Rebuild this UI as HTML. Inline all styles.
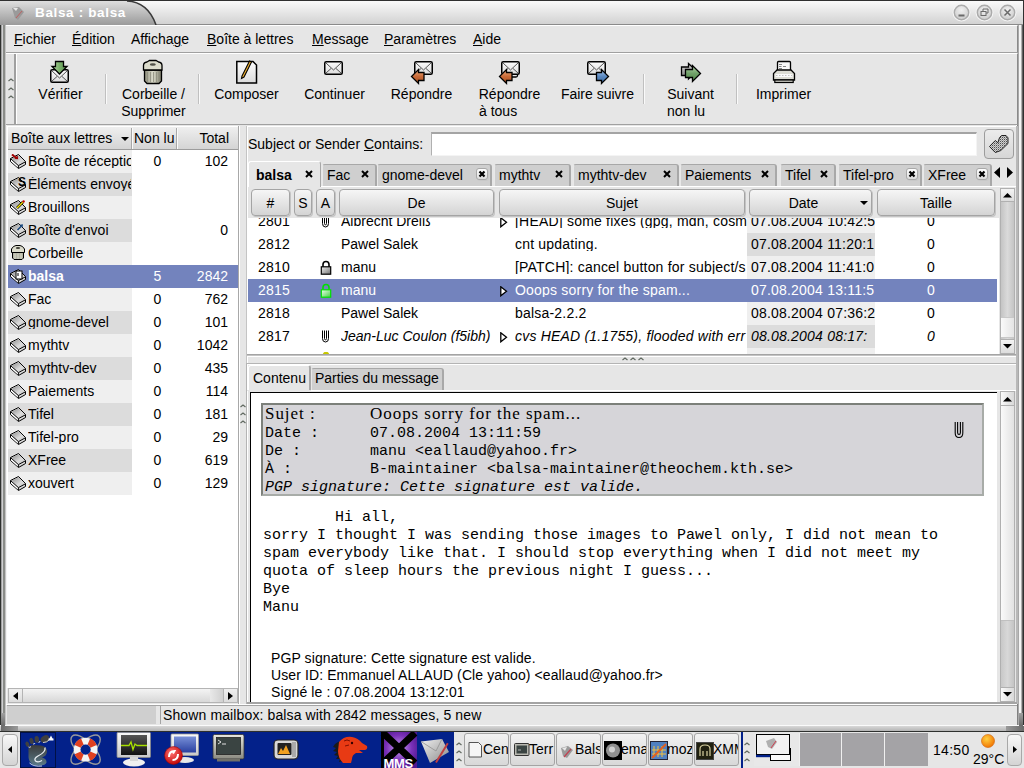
<!DOCTYPE html>
<html><head><meta charset="utf-8">
<style>
*{box-sizing:border-box}
html,body{margin:0;padding:0}
body{width:1024px;height:768px;position:relative;overflow:hidden;background:#e6e6e6;font-family:"Liberation Sans",sans-serif;font-size:14px;color:#000}
.a{position:absolute}
.t{position:absolute;white-space:pre;line-height:1}
u{text-decoration:underline;text-decoration-thickness:1px;text-underline-offset:1px}
</style></head><body>

<!-- ===== window frame ===== -->
<div class="a" style="left:0;top:0;width:1024px;height:732px;background:#e6e6e6"></div>
<div class="a" style="left:0;top:0;width:7px;height:732px;background:linear-gradient(90deg,#2e302e 0,#2e302e 1px,#a0a0a0 1px,#a0a0a0 2px,#d0d0d2 2px,#d0d0d2 3px,#8a8c88 3px,#8a8c88 5px,#c4c4c4 5px,#c4c4c4 6px,#f4f4f4 6px)"></div>
<div class="a" style="left:1016px;top:0;width:8px;height:732px;background:linear-gradient(90deg,#fff 0,#fff 1px,#808080 1px,#808080 2px,#a8a8a8 2px,#a8a8a8 3px,#f4f4f4 3px,#f4f4f4 5px,#b0b0b0 5px,#b0b0b0 6px,#606060 6px,#606060 7px,#303030 7px)"></div>
<div class="a" style="left:0;top:725px;width:1024px;height:7px;background:linear-gradient(#fafafa 0,#fafafa 1px,#d8d8d8 1px,#b4b4b4 6px,#2e302e 6px)"></div>
<div class="a" style="left:1006px;top:726px;width:18px;height:5px;background:linear-gradient(90deg,#9a9a9a,#6a6a6a)"></div>
<div class="a" style="left:1019px;top:713px;width:4px;height:13px;background:linear-gradient(#a0a0a0,#6a6a6a)"></div>
<div class="a" style="left:1px;top:726px;width:17px;height:5px;background:linear-gradient(90deg,#6a6a6a,#9a9a9a)"></div>
<div class="a" style="left:1px;top:713px;width:4px;height:13px;background:linear-gradient(#a0a0a0,#6a6a6a)"></div>
<!-- ===== title bar ===== -->
<div class="a" style="left:1px;top:0;width:1022px;height:25px;background:linear-gradient(#fafafa,#d2d2d2);border-top:1px solid #303030;border-bottom:1px solid #8a8a8a"></div>
<svg class="a" style="left:0;top:0" width="170" height="25">
<defs><linearGradient id="tg" x1="0" y1="0" x2="0" y2="1"><stop offset="0" stop-color="#dedede"/><stop offset="1" stop-color="#9a9a9a"/></linearGradient></defs>
<path d="M0 1 H127 Q148 2 156 25 H0 Z" fill="url(#tg)"/>
<path d="M127 1 Q148 2 156 25" fill="none" stroke="#3a3a3a" stroke-width="1.6"/>
<rect x="0" y="0" width="170" height="1" fill="#303030"/>
</svg>
<svg class="a" style="left:10px;top:5px" width="16" height="16"><path d="M2 3 L9 2 L14 7 L8 15 L5 13 Z" fill="#9a9a9a"/><path d="M3 3 L8 3 L6 6Z" fill="#e8e8e8"/><path d="M12 6 L6 13" stroke="#c06060" stroke-width="1"/></svg>
<div class="t" style="left:35px;top:6px;font-weight:bold;font-size:13.5px;letter-spacing:0.65px;color:#fff">Balsa : balsa</div>
<!-- window buttons -->
<svg class="a" style="left:950px;top:2px" width="70" height="22">
<defs><radialGradient id="wb" cx="0.5" cy="0.35" r="0.6"><stop offset="0" stop-color="#f0f0f0"/><stop offset="1" stop-color="#cfcfcf"/></radialGradient></defs>
<g transform="translate(11.5,10.5)"><circle r="9" fill="#f4f4f4"/><circle r="7.2" fill="url(#wb)" stroke="#ababab" stroke-width="1.4"/><rect x="-3" y="2" width="6" height="2" fill="#6a6a6a"/></g>
<g transform="translate(34.5,10.5)"><circle r="9" fill="#f4f4f4"/><circle r="7.2" fill="url(#wb)" stroke="#ababab" stroke-width="1.4"/><rect x="-3.5" y="-1" width="5" height="4" fill="none" stroke="#6a6a6a" stroke-width="1"/><path d="M-1.5 -1 V-3.5 H3.5 V0.5 H1.5" fill="none" stroke="#6a6a6a" stroke-width="1"/></g>
<g transform="translate(57.5,10.5)"><circle r="9" fill="#f4f4f4"/><circle r="7.2" fill="url(#wb)" stroke="#ababab" stroke-width="1.4"/><path d="M-3 -3 L3 3 M3 -3 L-3 3" stroke="#6a6a6a" stroke-width="1.5"/></g>
</svg>

<!-- ===== menubar ===== -->
<div class="a" style="left:6px;top:25px;width:1012px;height:28px;background:#e6e6e6;border-top:1px solid #fff;border-bottom:1px solid #a0a0a0;border-right:1px solid #8a8a8a"></div>
<div class="t" style="left:14px;top:32px"><u>F</u>ichier</div>
<div class="t" style="left:72px;top:32px"><u>É</u>dition</div>
<div class="t" style="left:131px;top:32px">Afficha<u>g</u>e</div>
<div class="t" style="left:207px;top:32px"><u>B</u>oîte à lettres</div>
<div class="t" style="left:312px;top:32px"><u>M</u>essage</div>
<div class="t" style="left:384px;top:32px"><u>P</u>aramètres</div>
<div class="t" style="left:473px;top:32px"><u>A</u>ide</div>

<!-- ===== toolbar ===== -->
<div class="a" style="left:6px;top:53px;width:1012px;height:72px;background:#e6e6e6;border-top:1px solid #fff;border-bottom:1px solid #a0a0a0;border-right:1px solid #8a8a8a"></div>
<div class="a" style="left:7px;top:54px;width:10px;height:70px;background:linear-gradient(90deg,#e4e4e4 0,#e4e4e4 7px,#a0a0a0 7px,#a0a0a0 9px,#fff 9px)"></div>

<!-- toolbar separators -->
<div class="a" style="left:105px;top:74px;width:1px;height:30px;background:#c0c0c0;border-right:1px solid #fafafa;width:2px"></div>
<div class="a" style="left:198px;top:74px;width:2px;height:30px;background:#c0c0c0;border-right:1px solid #fafafa"></div>
<div class="a" style="left:643px;top:74px;width:2px;height:30px;background:#c0c0c0;border-right:1px solid #fafafa"></div>
<div class="a" style="left:736px;top:74px;width:2px;height:30px;background:#c0c0c0;border-right:1px solid #fafafa"></div>
<!-- toolbar handle dots -->
<svg class="a" style="left:8px;top:78px" width="6" height="5"><path d="M0.5 3 L3 1 L5.5 3" fill="none" stroke="#606860" stroke-width="1.2"/></svg>
<svg class="a" style="left:8px;top:87px" width="6" height="5"><path d="M0.5 3 L3 1 L5.5 3" fill="none" stroke="#606860" stroke-width="1.2"/></svg>
<svg class="a" style="left:8px;top:95px" width="6" height="5"><path d="M0.5 3 L3 1 L5.5 3" fill="none" stroke="#606860" stroke-width="1.2"/></svg>

<!-- labels -->
<div class="t" style="left:20px;top:87px;width:81px;text-align:center">Vérifier</div>
<div class="t" style="left:113px;top:87px;width:81px;text-align:center">Corbeille /</div>
<div class="t" style="left:113px;top:104px;width:81px;text-align:center">Supprimer</div>
<div class="t" style="left:206px;top:87px;width:81px;text-align:center">Composer</div>
<div class="t" style="left:294px;top:87px;width:81px;text-align:center">Continuer</div>
<div class="t" style="left:381px;top:87px;width:81px;text-align:center">Répondre</div>
<div class="t" style="left:469px;top:87px;width:81px;text-align:center">Répondre</div>
<div class="t" style="left:479px;top:104px">à tous</div>
<div class="t" style="left:547px;top:87px;width:101px;text-align:center">Faire suivre</div>
<div class="t" style="left:650px;top:87px;width:81px;text-align:center">Suivant</div>
<div class="t" style="left:667px;top:104px">non lu</div>
<div class="t" style="left:743px;top:87px;width:81px;text-align:center">Imprimer</div>

<!-- icons -->
<svg class="a" style="left:0;top:0" width="820" height="90">
<defs>
<linearGradient id="env" x1="0" y1="0" x2="0" y2="1"><stop offset="0" stop-color="#fdfdfd"/><stop offset="1" stop-color="#dcdcdc"/></linearGradient>
<linearGradient id="grn" x1="0" y1="0" x2="1" y2="0"><stop offset="0" stop-color="#b8d8a8"/><stop offset="0.5" stop-color="#7ab06a"/><stop offset="1" stop-color="#5a9050"/></linearGradient>
<linearGradient id="org" x1="0" y1="0" x2="0" y2="1"><stop offset="0" stop-color="#f0b080"/><stop offset="0.5" stop-color="#c86a38"/><stop offset="1" stop-color="#a85020"/></linearGradient>
<linearGradient id="blu" x1="0" y1="0" x2="0" y2="1"><stop offset="0" stop-color="#a8c8ec"/><stop offset="0.5" stop-color="#5a88c0"/><stop offset="1" stop-color="#3a6aa0"/></linearGradient>
<linearGradient id="grn2" x1="0" y1="0" x2="0" y2="1"><stop offset="0" stop-color="#b0d8a8"/><stop offset="0.5" stop-color="#70a068"/><stop offset="1" stop-color="#4f8a48"/></linearGradient>
<linearGradient id="gry" x1="0" y1="0" x2="0" y2="1"><stop offset="0" stop-color="#e0e0e0"/><stop offset="1" stop-color="#707070"/></linearGradient>
<linearGradient id="trs" x1="0" y1="0" x2="1" y2="0"><stop offset="0" stop-color="#8a8a78"/><stop offset="0.5" stop-color="#dcdccc"/><stop offset="1" stop-color="#7a7a68"/></linearGradient>
<g id="envl"><rect x="0.75" y="0.75" width="17.5" height="12.5" rx="1.5" fill="url(#env)" stroke="#000" stroke-width="1.5"/><path d="M2 2 L9.5 9 L17 2 M2 12 L7 7.5 M17 12 L12 7.5" fill="none" stroke="#444" stroke-width="0.9"/></g>
</defs>
<!-- Vérifier -->
<g transform="translate(50,69)"><rect x="0.75" y="0.75" width="17.5" height="12.5" rx="1.5" fill="url(#env)" stroke="#000" stroke-width="1.5"/><path d="M2 2 L9.5 9 L17 2 M2 12 L7 7.5 M17 12 L12 7.5" fill="none" stroke="#444" stroke-width="0.9"/></g>
<path d="M55.5 61.5 H63.5 V66.5 H67 L59.5 74 L52 66.5 H55.5 Z" fill="url(#grn)" stroke="#000" stroke-width="1.3"/>
<!-- trash -->
<path d="M144.5 70 H161.5 V81 L159 83.5 H147 L144.5 81 Z" fill="url(#trs)" stroke="#000" stroke-width="1.3"/>
<path d="M147.5 72 V82 M150.5 72 V82 M153.5 72 V82 M156.5 72 V82 M159 72 V81" stroke="#8c8c7c" stroke-width="0.8"/>
<path d="M143.5 70 V65.5 Q143.5 62.5 147 62 L149.5 60.5 H156 L158.5 62 Q162 62.5 162 65.5 V70 Z" fill="#dcdccc" stroke="#000" stroke-width="1.3"/>
<ellipse cx="152.8" cy="64.5" rx="3" ry="1.3" fill="#505048"/>
<!-- compose -->
<path d="M236.8 61.5 H253 L256.5 65 V83 H236.8 Z" fill="url(#env)" stroke="#000" stroke-width="1.5"/>
<path d="M242 76 L249.5 61 L251.5 62 L244 77 L241.5 78.5 Z" fill="#f0b030" stroke="#000" stroke-width="1.1"/>
<!-- continuer -->
<g transform="translate(324,61)"><use href="#envl"/></g>
<!-- repondre -->
<g transform="translate(414,61)"><use href="#envl"/></g>
<path d="M411.5 76.5 L418.5 69.5 V72.5 H424 V80.5 H418.5 V83.5 Z" fill="url(#org)" stroke="#000" stroke-width="1.3"/>
<!-- repondre a tous -->
<rect x="504.5" y="64" width="13" height="13" rx="1.5" fill="#e8e8e8" stroke="#000" stroke-width="1.3"/>
<g transform="translate(501,61)"><use href="#envl"/></g>
<path d="M499.5 76.5 L506.5 69.5 V72.5 H512 V80.5 H506.5 V83.5 Z" fill="url(#org)" stroke="#000" stroke-width="1.3"/>
<!-- faire suivre -->
<g transform="translate(587,61)"><use href="#envl"/></g>
<path d="M608.5 76.5 L601.5 69.5 V72.5 H596.5 V80.5 H601.5 V83.5 Z" fill="url(#blu)" stroke="#000" stroke-width="1.3"/>
<!-- suivant non lu -->
<path d="M696.5 71 L688.5 63.5 V67 H681.5 V75.5 H688.5 V79 Z" fill="url(#gry)" stroke="#000" stroke-width="1.3"/>
<path d="M700.5 73.5 L692.5 65.5 V69.5 H685.5 V77.5 H692.5 V81.5 Z" fill="url(#grn2)" stroke="#000" stroke-width="1.3"/>
<!-- printer -->
<rect x="777.5" y="61.5" width="13" height="11" rx="1" fill="#f8f8f8" stroke="#000" stroke-width="1.3"/>
<path d="M779 64.5 H782 M779 66.5 H781.5 M783 66.5 H786 M779 68.5 H782 M779 70.5 H782 M783 70.5 H786" stroke="#777" stroke-width="0.9"/>
<path d="M777 70 L773.5 73.5 V80 H794.5 V73.5 L791 70 Z" fill="#dcdcd4" stroke="#000" stroke-width="1.3"/>
<rect x="775.5" y="74" width="17" height="3" fill="#fafafa"/>
<path d="M776 75.5 H792" stroke="#aaa" stroke-width="0.7" stroke-dasharray="1.5 1.5"/>
<rect x="774.8" y="80" width="18.4" height="2.5" fill="#c8c8c0" stroke="#000" stroke-width="1.2"/>
</svg>


<!-- ===== left mailbox panel ===== -->
<!-- MAILBOX -->
<div class="a" style="left:7px;top:126px;width:231px;height:578px;background:#fff;border-top:1px solid #fff"></div>
<div class="a" style="left:8px;top:127px;width:230px;height:23px;background:linear-gradient(#efefef,#d4d4d4);border-bottom:1px solid #9c9c9c"></div>
<div class="a" style="left:131px;top:128px;width:2px;height:21px;background:#a8a8a8;border-right:1px solid #fafafa"></div>
<div class="a" style="left:176px;top:128px;width:2px;height:21px;background:#a8a8a8;border-right:1px solid #fafafa"></div>
<div class="t" style="left:11px;top:131px">Boîte aux lettres</div>
<svg class="a" style="left:121px;top:137px" width="9" height="5"><path d="M0 0H8L4 4Z" fill="#000"/></svg>
<div class="t" style="left:134px;top:131px">Non lu</div>
<div class="t" style="left:178px;top:131px;width:51px;text-align:right">Total</div>
<div class="a" style="left:8px;top:150px;width:124px;height:23px;background:#efefef"></div>
<svg class="a" style="left:10px;top:154px" width="17" height="16"><defs><linearGradient id="trg0" x1="0" y1="0" x2="1" y2="1"><stop offset="0" stop-color="#8c8c8c"/><stop offset="0.6" stop-color="#dcdcdc"/><stop offset="1" stop-color="#c0c0c0"/></linearGradient></defs><path d="M0.5 4.5 L8.5 0.5 L15.5 7.5 V10.5 L8.5 14.5 L0.5 7.5 Z" fill="#d8d8d8" stroke="#000" stroke-width="1"/><path d="M1 5.2 L8.2 11.8 V13.8 L1 7.3Z" fill="#fff"/><path d="M2 4.6 L8.5 1.3 L14.8 7.6 L8.4 11.2 Z" fill="url(#trg0)"/><path d="M0.8 4.8 L8.4 11.6 L15.3 7.9 M8.4 11.6 V14" fill="none" stroke="#000" stroke-width="1"/><path d="M2 0.5 L7 4.5" stroke="#a00000" stroke-width="2"/><path d="M4.5 4.8 L8.2 5.2 L7.6 1.6 Z" fill="#a00000"/></svg>
<div class="t" style="left:28px;top:154px;width:103px;overflow:hidden;color:#000;">Boîte de réception</div>
<div class="t" style="left:140px;top:154px;width:35px;text-align:center;color:#000">0</div>
<div class="t" style="left:177px;top:154px;width:51px;text-align:right;color:#000">102</div>
<div class="a" style="left:8px;top:173px;width:124px;height:23px;background:#dcdcdc"></div>
<svg class="a" style="left:10px;top:177px" width="17" height="16"><defs><linearGradient id="trg1" x1="0" y1="0" x2="1" y2="1"><stop offset="0" stop-color="#8c8c8c"/><stop offset="0.6" stop-color="#dcdcdc"/><stop offset="1" stop-color="#c0c0c0"/></linearGradient></defs><path d="M0.5 4.5 L8.5 0.5 L15.5 7.5 V10.5 L8.5 14.5 L0.5 7.5 Z" fill="#d8d8d8" stroke="#000" stroke-width="1"/><path d="M1 5.2 L8.2 11.8 V13.8 L1 7.3Z" fill="#fff"/><path d="M2 4.6 L8.5 1.3 L14.8 7.6 L8.4 11.2 Z" fill="url(#trg1)"/><path d="M0.8 4.8 L8.4 11.6 L15.3 7.9 M8.4 11.6 V14" fill="none" stroke="#000" stroke-width="1"/><text x="8" y="9" font-family="Liberation Sans" font-weight="bold" font-size="12" fill="#000">S</text></svg>
<div class="t" style="left:28px;top:177px;width:103px;overflow:hidden;color:#000;">Éléments envoyés</div>
<div class="a" style="left:8px;top:196px;width:124px;height:23px;background:#efefef"></div>
<svg class="a" style="left:10px;top:200px" width="17" height="16"><defs><linearGradient id="trg2" x1="0" y1="0" x2="1" y2="1"><stop offset="0" stop-color="#8c8c8c"/><stop offset="0.6" stop-color="#dcdcdc"/><stop offset="1" stop-color="#c0c0c0"/></linearGradient></defs><path d="M0.5 4.5 L8.5 0.5 L15.5 7.5 V10.5 L8.5 14.5 L0.5 7.5 Z" fill="#d8d8d8" stroke="#000" stroke-width="1"/><path d="M1 5.2 L8.2 11.8 V13.8 L1 7.3Z" fill="#fff"/><path d="M2 4.6 L8.5 1.3 L14.8 7.6 L8.4 11.2 Z" fill="url(#trg2)"/><path d="M0.8 4.8 L8.4 11.6 L15.3 7.9 M8.4 11.6 V14" fill="none" stroke="#000" stroke-width="1"/><path d="M7 8 L13 2" stroke="#000" stroke-width="2.6"/><path d="M7 8 L13 2" stroke="#f0e000" stroke-width="1.4"/><circle cx="13.6" cy="1.4" r="1.2" fill="#c00000"/></svg>
<div class="t" style="left:28px;top:200px;width:103px;overflow:hidden;color:#000;">Brouillons</div>
<div class="a" style="left:8px;top:219px;width:124px;height:23px;background:#dcdcdc"></div>
<svg class="a" style="left:10px;top:223px" width="17" height="16"><defs><linearGradient id="trg3" x1="0" y1="0" x2="1" y2="1"><stop offset="0" stop-color="#8c8c8c"/><stop offset="0.6" stop-color="#dcdcdc"/><stop offset="1" stop-color="#c0c0c0"/></linearGradient></defs><path d="M0.5 4.5 L8.5 0.5 L15.5 7.5 V10.5 L8.5 14.5 L0.5 7.5 Z" fill="#d8d8d8" stroke="#000" stroke-width="1"/><path d="M1 5.2 L8.2 11.8 V13.8 L1 7.3Z" fill="#fff"/><path d="M2 4.6 L8.5 1.3 L14.8 7.6 L8.4 11.2 Z" fill="url(#trg3)"/><path d="M0.8 4.8 L8.4 11.6 L15.3 7.9 M8.4 11.6 V14" fill="none" stroke="#000" stroke-width="1"/><path d="M7.5 7 L12 2.5" stroke="#1a4a80" stroke-width="1.6"/><path d="M9.5 1.8 L13 1.2 L12.5 4.6 Z" fill="#1a4a80"/></svg>
<div class="t" style="left:28px;top:223px;width:103px;overflow:hidden;color:#000;">Boîte d'envoi</div>
<div class="t" style="left:177px;top:223px;width:51px;text-align:right;color:#000">0</div>
<div class="a" style="left:8px;top:242px;width:124px;height:23px;background:#efefef"></div>
<svg class="a" style="left:11px;top:245px" width="15" height="16"><path d="M1.5 7.5 H12.5 V13 L11 14.5 H3 L1.5 13 Z" fill="#b4b4a4" stroke="#000" stroke-width="1"/><path d="M4 8.5 V14 M7 8.5 V14 M10 8.5 V14" stroke="#d8d8c8" stroke-width="1"/><path d="M0.5 7.5 V4 L2.5 1.5 L5 0.5 H9 L11.5 1.5 L13.5 4 V7.5 Z" fill="#dcdccc" stroke="#000" stroke-width="1"/><ellipse cx="7" cy="3" rx="2.2" ry="1" fill="#404038"/></svg>
<div class="t" style="left:28px;top:246px;width:103px;overflow:hidden;color:#000;">Corbeille</div>
<div class="a" style="left:8px;top:265px;width:230px;height:23px;background:#7383bd"></div>
<svg class="a" style="left:10px;top:269px" width="17" height="16"><defs><linearGradient id="trg5" x1="0" y1="0" x2="1" y2="1"><stop offset="0" stop-color="#8c8c8c"/><stop offset="0.6" stop-color="#dcdcdc"/><stop offset="1" stop-color="#c0c0c0"/></linearGradient></defs><path d="M0.5 4.5 L8.5 0.5 L15.5 7.5 V10.5 L8.5 14.5 L0.5 7.5 Z" fill="#d8d8d8" stroke="#000" stroke-width="1"/><path d="M1 5.2 L8.2 11.8 V13.8 L1 7.3Z" fill="#fff"/><path d="M2 4.6 L8.5 1.3 L14.8 7.6 L8.4 11.2 Z" fill="url(#trg5)"/><path d="M0.8 4.8 L8.4 11.6 L15.3 7.9 M8.4 11.6 V14" fill="none" stroke="#000" stroke-width="1"/><rect x="6" y="2" width="6" height="8" fill="#fff" stroke="#000" stroke-width="1"/><path d="M8 4V7" stroke="#000" stroke-width="1"/></svg>
<div class="t" style="left:28px;top:269px;width:103px;overflow:hidden;color:#fff;font-weight:bold;">balsa</div>
<div class="t" style="left:140px;top:269px;width:35px;text-align:center;color:#fff">5</div>
<div class="t" style="left:177px;top:269px;width:51px;text-align:right;color:#fff">2842</div>
<div class="a" style="left:8px;top:288px;width:124px;height:23px;background:#efefef"></div>
<svg class="a" style="left:10px;top:292px" width="17" height="16"><defs><linearGradient id="trg6" x1="0" y1="0" x2="1" y2="1"><stop offset="0" stop-color="#8c8c8c"/><stop offset="0.6" stop-color="#dcdcdc"/><stop offset="1" stop-color="#c0c0c0"/></linearGradient></defs><path d="M0.5 4.5 L8.5 0.5 L15.5 7.5 V10.5 L8.5 14.5 L0.5 7.5 Z" fill="#d8d8d8" stroke="#000" stroke-width="1"/><path d="M1 5.2 L8.2 11.8 V13.8 L1 7.3Z" fill="#fff"/><path d="M2 4.6 L8.5 1.3 L14.8 7.6 L8.4 11.2 Z" fill="url(#trg6)"/><path d="M0.8 4.8 L8.4 11.6 L15.3 7.9 M8.4 11.6 V14" fill="none" stroke="#000" stroke-width="1"/></svg>
<div class="t" style="left:28px;top:292px;width:103px;overflow:hidden;color:#000;">Fac</div>
<div class="t" style="left:140px;top:292px;width:35px;text-align:center;color:#000">0</div>
<div class="t" style="left:177px;top:292px;width:51px;text-align:right;color:#000">762</div>
<div class="a" style="left:8px;top:311px;width:124px;height:23px;background:#dcdcdc"></div>
<svg class="a" style="left:10px;top:315px" width="17" height="16"><defs><linearGradient id="trg7" x1="0" y1="0" x2="1" y2="1"><stop offset="0" stop-color="#8c8c8c"/><stop offset="0.6" stop-color="#dcdcdc"/><stop offset="1" stop-color="#c0c0c0"/></linearGradient></defs><path d="M0.5 4.5 L8.5 0.5 L15.5 7.5 V10.5 L8.5 14.5 L0.5 7.5 Z" fill="#d8d8d8" stroke="#000" stroke-width="1"/><path d="M1 5.2 L8.2 11.8 V13.8 L1 7.3Z" fill="#fff"/><path d="M2 4.6 L8.5 1.3 L14.8 7.6 L8.4 11.2 Z" fill="url(#trg7)"/><path d="M0.8 4.8 L8.4 11.6 L15.3 7.9 M8.4 11.6 V14" fill="none" stroke="#000" stroke-width="1"/></svg>
<div class="t" style="left:28px;top:315px;width:103px;overflow:hidden;color:#000;">gnome-devel</div>
<div class="t" style="left:140px;top:315px;width:35px;text-align:center;color:#000">0</div>
<div class="t" style="left:177px;top:315px;width:51px;text-align:right;color:#000">101</div>
<div class="a" style="left:8px;top:334px;width:124px;height:23px;background:#efefef"></div>
<svg class="a" style="left:10px;top:338px" width="17" height="16"><defs><linearGradient id="trg8" x1="0" y1="0" x2="1" y2="1"><stop offset="0" stop-color="#8c8c8c"/><stop offset="0.6" stop-color="#dcdcdc"/><stop offset="1" stop-color="#c0c0c0"/></linearGradient></defs><path d="M0.5 4.5 L8.5 0.5 L15.5 7.5 V10.5 L8.5 14.5 L0.5 7.5 Z" fill="#d8d8d8" stroke="#000" stroke-width="1"/><path d="M1 5.2 L8.2 11.8 V13.8 L1 7.3Z" fill="#fff"/><path d="M2 4.6 L8.5 1.3 L14.8 7.6 L8.4 11.2 Z" fill="url(#trg8)"/><path d="M0.8 4.8 L8.4 11.6 L15.3 7.9 M8.4 11.6 V14" fill="none" stroke="#000" stroke-width="1"/></svg>
<div class="t" style="left:28px;top:338px;width:103px;overflow:hidden;color:#000;">mythtv</div>
<div class="t" style="left:140px;top:338px;width:35px;text-align:center;color:#000">0</div>
<div class="t" style="left:177px;top:338px;width:51px;text-align:right;color:#000">1042</div>
<div class="a" style="left:8px;top:357px;width:124px;height:23px;background:#dcdcdc"></div>
<svg class="a" style="left:10px;top:361px" width="17" height="16"><defs><linearGradient id="trg9" x1="0" y1="0" x2="1" y2="1"><stop offset="0" stop-color="#8c8c8c"/><stop offset="0.6" stop-color="#dcdcdc"/><stop offset="1" stop-color="#c0c0c0"/></linearGradient></defs><path d="M0.5 4.5 L8.5 0.5 L15.5 7.5 V10.5 L8.5 14.5 L0.5 7.5 Z" fill="#d8d8d8" stroke="#000" stroke-width="1"/><path d="M1 5.2 L8.2 11.8 V13.8 L1 7.3Z" fill="#fff"/><path d="M2 4.6 L8.5 1.3 L14.8 7.6 L8.4 11.2 Z" fill="url(#trg9)"/><path d="M0.8 4.8 L8.4 11.6 L15.3 7.9 M8.4 11.6 V14" fill="none" stroke="#000" stroke-width="1"/></svg>
<div class="t" style="left:28px;top:361px;width:103px;overflow:hidden;color:#000;">mythtv-dev</div>
<div class="t" style="left:140px;top:361px;width:35px;text-align:center;color:#000">0</div>
<div class="t" style="left:177px;top:361px;width:51px;text-align:right;color:#000">435</div>
<div class="a" style="left:8px;top:380px;width:124px;height:23px;background:#efefef"></div>
<svg class="a" style="left:10px;top:384px" width="17" height="16"><defs><linearGradient id="trg10" x1="0" y1="0" x2="1" y2="1"><stop offset="0" stop-color="#8c8c8c"/><stop offset="0.6" stop-color="#dcdcdc"/><stop offset="1" stop-color="#c0c0c0"/></linearGradient></defs><path d="M0.5 4.5 L8.5 0.5 L15.5 7.5 V10.5 L8.5 14.5 L0.5 7.5 Z" fill="#d8d8d8" stroke="#000" stroke-width="1"/><path d="M1 5.2 L8.2 11.8 V13.8 L1 7.3Z" fill="#fff"/><path d="M2 4.6 L8.5 1.3 L14.8 7.6 L8.4 11.2 Z" fill="url(#trg10)"/><path d="M0.8 4.8 L8.4 11.6 L15.3 7.9 M8.4 11.6 V14" fill="none" stroke="#000" stroke-width="1"/></svg>
<div class="t" style="left:28px;top:384px;width:103px;overflow:hidden;color:#000;">Paiements</div>
<div class="t" style="left:140px;top:384px;width:35px;text-align:center;color:#000">0</div>
<div class="t" style="left:177px;top:384px;width:51px;text-align:right;color:#000">114</div>
<div class="a" style="left:8px;top:403px;width:124px;height:23px;background:#dcdcdc"></div>
<svg class="a" style="left:10px;top:407px" width="17" height="16"><defs><linearGradient id="trg11" x1="0" y1="0" x2="1" y2="1"><stop offset="0" stop-color="#8c8c8c"/><stop offset="0.6" stop-color="#dcdcdc"/><stop offset="1" stop-color="#c0c0c0"/></linearGradient></defs><path d="M0.5 4.5 L8.5 0.5 L15.5 7.5 V10.5 L8.5 14.5 L0.5 7.5 Z" fill="#d8d8d8" stroke="#000" stroke-width="1"/><path d="M1 5.2 L8.2 11.8 V13.8 L1 7.3Z" fill="#fff"/><path d="M2 4.6 L8.5 1.3 L14.8 7.6 L8.4 11.2 Z" fill="url(#trg11)"/><path d="M0.8 4.8 L8.4 11.6 L15.3 7.9 M8.4 11.6 V14" fill="none" stroke="#000" stroke-width="1"/></svg>
<div class="t" style="left:28px;top:407px;width:103px;overflow:hidden;color:#000;">Tifel</div>
<div class="t" style="left:140px;top:407px;width:35px;text-align:center;color:#000">0</div>
<div class="t" style="left:177px;top:407px;width:51px;text-align:right;color:#000">181</div>
<div class="a" style="left:8px;top:426px;width:124px;height:23px;background:#efefef"></div>
<svg class="a" style="left:10px;top:430px" width="17" height="16"><defs><linearGradient id="trg12" x1="0" y1="0" x2="1" y2="1"><stop offset="0" stop-color="#8c8c8c"/><stop offset="0.6" stop-color="#dcdcdc"/><stop offset="1" stop-color="#c0c0c0"/></linearGradient></defs><path d="M0.5 4.5 L8.5 0.5 L15.5 7.5 V10.5 L8.5 14.5 L0.5 7.5 Z" fill="#d8d8d8" stroke="#000" stroke-width="1"/><path d="M1 5.2 L8.2 11.8 V13.8 L1 7.3Z" fill="#fff"/><path d="M2 4.6 L8.5 1.3 L14.8 7.6 L8.4 11.2 Z" fill="url(#trg12)"/><path d="M0.8 4.8 L8.4 11.6 L15.3 7.9 M8.4 11.6 V14" fill="none" stroke="#000" stroke-width="1"/></svg>
<div class="t" style="left:28px;top:430px;width:103px;overflow:hidden;color:#000;">Tifel-pro</div>
<div class="t" style="left:140px;top:430px;width:35px;text-align:center;color:#000">0</div>
<div class="t" style="left:177px;top:430px;width:51px;text-align:right;color:#000">29</div>
<div class="a" style="left:8px;top:449px;width:124px;height:23px;background:#dcdcdc"></div>
<svg class="a" style="left:10px;top:453px" width="17" height="16"><defs><linearGradient id="trg13" x1="0" y1="0" x2="1" y2="1"><stop offset="0" stop-color="#8c8c8c"/><stop offset="0.6" stop-color="#dcdcdc"/><stop offset="1" stop-color="#c0c0c0"/></linearGradient></defs><path d="M0.5 4.5 L8.5 0.5 L15.5 7.5 V10.5 L8.5 14.5 L0.5 7.5 Z" fill="#d8d8d8" stroke="#000" stroke-width="1"/><path d="M1 5.2 L8.2 11.8 V13.8 L1 7.3Z" fill="#fff"/><path d="M2 4.6 L8.5 1.3 L14.8 7.6 L8.4 11.2 Z" fill="url(#trg13)"/><path d="M0.8 4.8 L8.4 11.6 L15.3 7.9 M8.4 11.6 V14" fill="none" stroke="#000" stroke-width="1"/></svg>
<div class="t" style="left:28px;top:453px;width:103px;overflow:hidden;color:#000;">XFree</div>
<div class="t" style="left:140px;top:453px;width:35px;text-align:center;color:#000">0</div>
<div class="t" style="left:177px;top:453px;width:51px;text-align:right;color:#000">619</div>
<div class="a" style="left:8px;top:472px;width:124px;height:23px;background:#efefef"></div>
<svg class="a" style="left:10px;top:476px" width="17" height="16"><defs><linearGradient id="trg14" x1="0" y1="0" x2="1" y2="1"><stop offset="0" stop-color="#8c8c8c"/><stop offset="0.6" stop-color="#dcdcdc"/><stop offset="1" stop-color="#c0c0c0"/></linearGradient></defs><path d="M0.5 4.5 L8.5 0.5 L15.5 7.5 V10.5 L8.5 14.5 L0.5 7.5 Z" fill="#d8d8d8" stroke="#000" stroke-width="1"/><path d="M1 5.2 L8.2 11.8 V13.8 L1 7.3Z" fill="#fff"/><path d="M2 4.6 L8.5 1.3 L14.8 7.6 L8.4 11.2 Z" fill="url(#trg14)"/><path d="M0.8 4.8 L8.4 11.6 L15.3 7.9 M8.4 11.6 V14" fill="none" stroke="#000" stroke-width="1"/></svg>
<div class="t" style="left:28px;top:476px;width:103px;overflow:hidden;color:#000;">xouvert</div>
<div class="t" style="left:140px;top:476px;width:35px;text-align:center;color:#000">0</div>
<div class="t" style="left:177px;top:476px;width:51px;text-align:right;color:#000">129</div>
<div class="a" style="left:7px;top:687px;width:232px;height:17px;background:#e6e6e6;border-top:1px solid #fff"></div>
<div class="a" style="left:8px;top:688px;width:230px;height:15px;background:linear-gradient(#f4f4f4,#d8d8d8);border:1px solid #b4b4b4"></div>
<div class="a" style="left:9px;top:689px;width:14px;height:13px;background:linear-gradient(#f0f0f0,#dcdcdc);border-right:1px solid #b4b4b4"></div>
<svg class="a" style="left:13px;top:692px" width="6" height="8"><path d="M5 0V8L0 4Z" fill="#000"/></svg>
<div class="a" style="left:210px;top:689px;width:13px;height:13px;background:linear-gradient(90deg,#e8e8e8,#d0d0d0)"></div>
<div class="a" style="left:223px;top:689px;width:14px;height:13px;background:linear-gradient(#f0f0f0,#dcdcdc);border-left:1px solid #b4b4b4"></div>
<svg class="a" style="left:228px;top:692px" width="6" height="8"><path d="M0 0V8L5 4Z" fill="#000"/></svg>
<div class="a" style="left:238px;top:126px;width:9px;height:578px;background:linear-gradient(90deg,#a8a8a8 0,#a8a8a8 1px,#fff 1px,#fff 2px,#e6e6e6 2px)"></div>
<div class="a" style="left:246px;top:126px;width:1px;height:578px;background:#c4c4c4"></div>
<svg class="a" style="left:240px;top:404px" width="6" height="5"><path d="M0.5 3 L3 1 L5.5 3" fill="none" stroke="#606860" stroke-width="1.2"/></svg>
<svg class="a" style="left:240px;top:412px" width="6" height="5"><path d="M0.5 3 L3 1 L5.5 3" fill="none" stroke="#606860" stroke-width="1.2"/></svg>
<svg class="a" style="left:240px;top:420px" width="6" height="5"><path d="M0.5 3 L3 1 L5.5 3" fill="none" stroke="#606860" stroke-width="1.2"/></svg>
<!-- /MAILBOX -->

<!-- ===== right panel ===== -->
<!-- RIGHT -->
<div class="a" style="left:247px;top:126px;width:771px;height:578px;background:#e6e6e6;border-top:1px solid #fff;border-left:1px solid #fff"></div>
<div class="a" style="left:1016px;top:126px;width:2px;height:578px;background:#b8b8b8"></div>
<div class="t" style="left:248px;top:137px">Subject or Sender <u>C</u>ontains:</div>
<div class="a" style="left:431px;top:132px;width:546px;height:24px;background:#fff;border-top:2px solid #a4a4a4;border-left:1px solid #b0b0b0;border-right:1px solid #f4f4f4;border-bottom:1px solid #f4f4f4"></div>
<div class="a" style="left:984px;top:129px;width:30px;height:30px;border:1px solid #9c9c9c;border-radius:4px;background:linear-gradient(#ececec,#d6d6d6)"></div>
<svg class="a" style="left:984px;top:129px" width="30" height="30"><defs><pattern id="dith" width="2" height="2" patternUnits="userSpaceOnUse"><rect width="2" height="2" fill="#cfcfcf"/><rect width="1" height="1" fill="#505050"/><rect x="1" y="1" width="1" height="1" fill="#9a9a9a"/></pattern></defs><path d="M5.5 17.5 L11.3 11.5 L13.8 13.8 L15.6 8.5 L17.5 6.5 H22 L24 8.8 V14.5 L16.8 21.5 L11.3 23.5 Z" fill="url(#dith)" stroke="#202020" stroke-width="1" stroke-linejoin="round"/></svg>
<div class="a" style="left:247px;top:186px;width:769px;height:1px;background:#fff"></div>
<div class="a" style="left:248px;top:161px;width:73px;height:26px;background:#e6e6e6;border-top:1px solid #fff;border-left:1px solid #fff;border-right:1px solid #a8a8a8;border-top-left-radius:3px;border-top-right-radius:3px"></div>
<div class="t" style="left:256px;top:168px;font-weight:bold">balsa</div>
<svg class="a" style="left:305px;top:170px" width="8" height="8"><path d="M1 1L7 7M7 1L1 7" stroke="#000" stroke-width="2"/></svg>
<div class="a" style="left:322px;top:164px;width:55px;height:22px;background:#cfcfcf;border-top:1px solid #a8a8a8;border-left:1px solid #e8e8e8;border-right:2px solid #a8a8a8;border-top-left-radius:3px;border-top-right-radius:3px"></div>
<div class="t" style="left:327px;top:168px">Fac</div>
<svg class="a" style="left:361px;top:170px" width="8" height="8"><path d="M1 1L7 7M7 1L1 7" stroke="#000" stroke-width="2"/></svg>
<div class="a" style="left:377px;top:164px;width:115px;height:22px;background:#cfcfcf;border-top:1px solid #a8a8a8;border-left:1px solid #e8e8e8;border-right:2px solid #a8a8a8;border-top-left-radius:3px;border-top-right-radius:3px"></div>
<div class="t" style="left:382px;top:168px">gnome-devel</div>
<div class="a" style="left:476px;top:168px;width:12px;height:12px;border:1px solid #a8a8a8;border-radius:3px;background:linear-gradient(#fff,#dcdcdc);box-shadow:1px 1px 0 #c8c8c8"></div>
<svg class="a" style="left:478px;top:170px" width="8" height="8"><path d="M1.5 1.5L6.5 6.5M6.5 1.5L1.5 6.5" stroke="#000" stroke-width="2.2"/></svg>
<div class="a" style="left:494px;top:164px;width:77px;height:22px;background:#cfcfcf;border-top:1px solid #a8a8a8;border-left:1px solid #e8e8e8;border-right:2px solid #a8a8a8;border-top-left-radius:3px;border-top-right-radius:3px"></div>
<div class="t" style="left:499px;top:168px">mythtv</div>
<svg class="a" style="left:555px;top:170px" width="8" height="8"><path d="M1 1L7 7M7 1L1 7" stroke="#000" stroke-width="2"/></svg>
<div class="a" style="left:573px;top:164px;width:106px;height:22px;background:#cfcfcf;border-top:1px solid #a8a8a8;border-left:1px solid #e8e8e8;border-right:2px solid #a8a8a8;border-top-left-radius:3px;border-top-right-radius:3px"></div>
<div class="t" style="left:578px;top:168px">mythtv-dev</div>
<svg class="a" style="left:663px;top:170px" width="8" height="8"><path d="M1 1L7 7M7 1L1 7" stroke="#000" stroke-width="2"/></svg>
<div class="a" style="left:680px;top:164px;width:97px;height:22px;background:#cfcfcf;border-top:1px solid #a8a8a8;border-left:1px solid #e8e8e8;border-right:2px solid #a8a8a8;border-top-left-radius:3px;border-top-right-radius:3px"></div>
<div class="t" style="left:685px;top:168px">Paiements</div>
<svg class="a" style="left:761px;top:170px" width="8" height="8"><path d="M1 1L7 7M7 1L1 7" stroke="#000" stroke-width="2"/></svg>
<div class="a" style="left:780px;top:164px;width:56px;height:22px;background:#cfcfcf;border-top:1px solid #a8a8a8;border-left:1px solid #e8e8e8;border-right:2px solid #a8a8a8;border-top-left-radius:3px;border-top-right-radius:3px"></div>
<div class="t" style="left:785px;top:168px">Tifel</div>
<svg class="a" style="left:820px;top:170px" width="8" height="8"><path d="M1 1L7 7M7 1L1 7" stroke="#000" stroke-width="2"/></svg>
<div class="a" style="left:838px;top:164px;width:84px;height:22px;background:#cfcfcf;border-top:1px solid #a8a8a8;border-left:1px solid #e8e8e8;border-right:2px solid #a8a8a8;border-top-left-radius:3px;border-top-right-radius:3px"></div>
<div class="t" style="left:843px;top:168px">Tifel-pro</div>
<div class="a" style="left:906px;top:168px;width:12px;height:12px;border:1px solid #a8a8a8;border-radius:3px;background:linear-gradient(#fff,#dcdcdc);box-shadow:1px 1px 0 #c8c8c8"></div>
<svg class="a" style="left:908px;top:170px" width="8" height="8"><path d="M1.5 1.5L6.5 6.5M6.5 1.5L1.5 6.5" stroke="#000" stroke-width="2.2"/></svg>
<div class="a" style="left:923px;top:164px;width:69px;height:22px;background:#cfcfcf;border-top:1px solid #a8a8a8;border-left:1px solid #e8e8e8;border-right:2px solid #a8a8a8;border-top-left-radius:3px;border-top-right-radius:3px"></div>
<div class="t" style="left:928px;top:168px">XFree</div>
<div class="a" style="left:976px;top:168px;width:12px;height:12px;border:1px solid #a8a8a8;border-radius:3px;background:linear-gradient(#fff,#dcdcdc);box-shadow:1px 1px 0 #c8c8c8"></div>
<svg class="a" style="left:978px;top:170px" width="8" height="8"><path d="M1.5 1.5L6.5 6.5M6.5 1.5L1.5 6.5" stroke="#000" stroke-width="2.2"/></svg>
<svg class="a" style="left:994px;top:167px" width="20" height="12"><path d="M6 0V11L0 5.5Z" fill="#000"/><path d="M13 0V11L19 5.5Z" fill="#000"/></svg>
<div class="a" style="left:248px;top:187px;width:751px;height:167px;background:#fff"></div>
<div class="a" style="left:248px;top:187px;width:751px;height:31px;background:#e6e6e6"></div>
<div class="a" style="left:251px;top:189px;width:39px;height:27px;border:1px solid #a4a4a4;border-radius:4px;background:linear-gradient(#f6f6f6,#d4d4d4);box-shadow:1px 1px 0 #c4c4c4"></div>
<div class="t" style="left:251px;top:196px;width:39px;text-align:center">#</div>
<div class="a" style="left:294px;top:189px;width:18px;height:27px;border:1px solid #a4a4a4;border-radius:4px;background:linear-gradient(#f6f6f6,#d4d4d4);box-shadow:1px 1px 0 #c4c4c4"></div>
<div class="t" style="left:294px;top:196px;width:18px;text-align:center">S</div>
<div class="a" style="left:316px;top:189px;width:19px;height:27px;border:1px solid #a4a4a4;border-radius:4px;background:linear-gradient(#f6f6f6,#d4d4d4);box-shadow:1px 1px 0 #c4c4c4"></div>
<div class="t" style="left:316px;top:196px;width:19px;text-align:center">A</div>
<div class="a" style="left:339px;top:189px;width:155px;height:27px;border:1px solid #a4a4a4;border-radius:4px;background:linear-gradient(#f6f6f6,#d4d4d4);box-shadow:1px 1px 0 #c4c4c4"></div>
<div class="t" style="left:339px;top:196px;width:155px;text-align:center">De</div>
<div class="a" style="left:499px;top:189px;width:246px;height:27px;border:1px solid #a4a4a4;border-radius:4px;background:linear-gradient(#f6f6f6,#d4d4d4);box-shadow:1px 1px 0 #c4c4c4"></div>
<div class="t" style="left:499px;top:196px;width:246px;text-align:center">Sujet</div>
<div class="a" style="left:749px;top:189px;width:123px;height:27px;border:1px solid #a4a4a4;border-radius:4px;background:linear-gradient(#f6f6f6,#d4d4d4);box-shadow:1px 1px 0 #c4c4c4"></div>
<div class="t" style="left:749px;top:196px;width:109px;text-align:center">Date</div>
<svg class="a" style="left:860px;top:201px" width="9" height="5"><path d="M0 0H8L4 4Z" fill="#000"/></svg>
<div class="a" style="left:877px;top:189px;width:118px;height:27px;border:1px solid #a4a4a4;border-radius:4px;background:linear-gradient(#f6f6f6,#d4d4d4);box-shadow:1px 1px 0 #c4c4c4"></div>
<div class="t" style="left:877px;top:196px;width:118px;text-align:center">Taille</div>
<div class="a" style="left:248px;top:218px;width:751px;height:136px;overflow:hidden;letter-spacing:0.2px">
<div class="a" style="left:499px;top:-8px;width:128px;height:23px;background:#efefef"></div>
<div class="t" style="left:10px;top:-4px;color:#000">2801</div>
<div class="t" style="left:93px;top:-4px;width:152px;overflow:hidden;letter-spacing:0;color:#000;">Albrecht Dreiß</div>
<div class="t" style="left:267px;top:-4px;width:232px;overflow:hidden;color:#000;">[HEAD] some fixes (gpg, mdn, cosm</div>
<div class="t" style="left:503px;top:-4px;width:124px;overflow:hidden;color:#000;">07.08.2004 10:42:5</div>
<div class="t" style="left:663px;top:-4px;width:40px;text-align:center;color:#000;">0</div>
<svg class="a" style="left:252px;top:-1px" width="8" height="11"><path d="M0.8 0.8 V9.8 L6.5 5.3 Z" fill="#fff" stroke="#000" stroke-width="1.3"/></svg>
<svg class="a" style="left:73px;top:-3px" width="9" height="14"><path d="M1.5 0.5 V8.5 Q1.5 12 4.5 12 Q7.5 12 7.5 8.5 V0.5 M3.5 0.5 V8.5 Q3.5 9.8 4.5 9.8 Q5.5 9.8 5.5 8.5 V0.5" fill="none" stroke="#000" stroke-width="1"/></svg>
<div class="a" style="left:499px;top:15px;width:128px;height:23px;background:#dcdcdc"></div>
<div class="t" style="left:10px;top:19px;color:#000">2812</div>
<div class="t" style="left:93px;top:19px;width:152px;overflow:hidden;letter-spacing:0;color:#000;">Pawel Salek</div>
<div class="t" style="left:267px;top:19px;width:232px;overflow:hidden;color:#000;">cnt updating.</div>
<div class="t" style="left:503px;top:19px;width:124px;overflow:hidden;color:#000;">07.08.2004 11:20:1</div>
<div class="t" style="left:663px;top:19px;width:40px;text-align:center;color:#000;">0</div>
<div class="a" style="left:499px;top:38px;width:128px;height:23px;background:#efefef"></div>
<div class="t" style="left:10px;top:42px;color:#000">2810</div>
<div class="t" style="left:93px;top:42px;width:152px;overflow:hidden;letter-spacing:0;color:#000;">manu</div>
<div class="t" style="left:267px;top:42px;width:232px;overflow:hidden;color:#000;">[PATCH]: cancel button for subject/s</div>
<div class="t" style="left:503px;top:42px;width:124px;overflow:hidden;color:#000;">07.08.2004 11:41:0</div>
<div class="t" style="left:663px;top:42px;width:40px;text-align:center;color:#000;">0</div>
<svg class="a" style="left:72px;top:42px" width="12" height="15"><path d="M3 7 V4.5 Q3 1.5 6 1.5 Q9 1.5 9 4.5 V7" fill="none" stroke="#000" stroke-width="1.6"/><defs><linearGradient id="lk" x1="0" y1="0" x2="1" y2="1"><stop offset="0" stop-color="#f0f0f0"/><stop offset="1" stop-color="#707070"/></linearGradient></defs><rect x="1.3" y="6.8" width="9.4" height="7.4" fill="url(#lk)" stroke="#000" stroke-width="1.2"/></svg>
<div class="a" style="left:0;top:61px;width:749px;height:23px;background:#7383bd"></div>
<div class="t" style="left:10px;top:65px;color:#fff">2815</div>
<div class="t" style="left:93px;top:65px;width:152px;overflow:hidden;letter-spacing:0;color:#fff;">manu</div>
<div class="t" style="left:267px;top:65px;width:232px;overflow:hidden;color:#fff;">Ooops sorry for the spam...</div>
<div class="t" style="left:503px;top:65px;width:124px;overflow:hidden;color:#fff;">07.08.2004 13:11:5</div>
<div class="t" style="left:663px;top:65px;width:40px;text-align:center;color:#fff;">0</div>
<svg class="a" style="left:252px;top:68px" width="8" height="11"><path d="M0.8 0.8 V9.8 L6.5 5.3 Z" fill="#fff" stroke="#000" stroke-width="1.3"/></svg>
<svg class="a" style="left:72px;top:65px" width="12" height="15"><path d="M3 7 V4.5 Q3 1.5 6 1.5 Q9 1.5 9 4.5 V7" fill="none" stroke="#00e000" stroke-width="1.6"/><defs><linearGradient id="glk" x1="0" y1="0" x2="1" y2="1"><stop offset="0" stop-color="#f0fff0"/><stop offset="1" stop-color="#40d040"/></linearGradient></defs><rect x="1.3" y="6.8" width="9.4" height="7.4" fill="url(#glk)" stroke="#00e000" stroke-width="1.2"/></svg>
<div class="a" style="left:499px;top:84px;width:128px;height:23px;background:#efefef"></div>
<div class="t" style="left:10px;top:88px;color:#000">2818</div>
<div class="t" style="left:93px;top:88px;width:152px;overflow:hidden;letter-spacing:0;color:#000;">Pawel Salek</div>
<div class="t" style="left:267px;top:88px;width:232px;overflow:hidden;color:#000;">balsa-2.2.2</div>
<div class="t" style="left:503px;top:88px;width:124px;overflow:hidden;color:#000;">08.08.2004 07:36:2</div>
<div class="t" style="left:663px;top:88px;width:40px;text-align:center;color:#000;">0</div>
<div class="a" style="left:499px;top:107px;width:128px;height:23px;background:#dcdcdc"></div>
<div class="t" style="left:10px;top:111px;color:#000">2817</div>
<div class="t" style="left:93px;top:111px;width:152px;overflow:hidden;letter-spacing:0;color:#000;font-style:italic;">Jean-Luc Coulon (f5ibh)</div>
<div class="t" style="left:267px;top:111px;width:232px;overflow:hidden;color:#000;font-style:italic;">cvs HEAD (1.1755), flooded with err</div>
<div class="t" style="left:503px;top:111px;width:124px;overflow:hidden;color:#000;font-style:italic;">08.08.2004 08:17:</div>
<div class="t" style="left:663px;top:111px;width:40px;text-align:center;color:#000;font-style:italic;">0</div>
<svg class="a" style="left:252px;top:114px" width="8" height="11"><path d="M0.8 0.8 V9.8 L6.5 5.3 Z" fill="#fff" stroke="#000" stroke-width="1.3"/></svg>
<svg class="a" style="left:73px;top:112px" width="9" height="14"><path d="M1.5 0.5 V8.5 Q1.5 12 4.5 12 Q7.5 12 7.5 8.5 V0.5 M3.5 0.5 V8.5 Q3.5 9.8 4.5 9.8 Q5.5 9.8 5.5 8.5 V0.5" fill="none" stroke="#000" stroke-width="1"/></svg>
<div class="a" style="left:499px;top:130px;width:128px;height:23px;background:#efefef"></div>
<svg class="a" style="left:74px;top:133px" width="8" height="5"><path d="M0.5 4 Q1 2 2.5 1 H5.5 Q7 2 7.5 4 V5 H0.5Z" fill="#c8c800"/></svg>
</div>
<div class="a" style="left:247px;top:354px;width:769px;height:3px;background:linear-gradient(#a4a4a4 0,#a4a4a4 1px,#c4c4c4 1px,#c4c4c4 2px,#fff 2px)"></div>
<div class="a" style="left:999px;top:187px;width:17px;height:167px;background:#e6e6e6"></div>
<div class="a" style="left:1000px;top:188px;width:15px;height:166px;background:linear-gradient(90deg,#c4c4c4,#dadada 50%,#c4c4c4);border:1px solid #b0b0b0"></div>
<div class="a" style="left:1001px;top:189px;width:13px;height:13px;background:linear-gradient(#f4f4f4,#dcdcdc);border-bottom:1px solid #b0b0b0"></div>
<svg class="a" style="left:1003px;top:193px" width="9" height="5"><path d="M0 4.5H9L4.5 0Z" fill="#000"/></svg>
<div class="a" style="left:1001px;top:317px;width:13px;height:21px;background:linear-gradient(90deg,#fafafa,#e4e4e4);border-top:1px solid #c8c8c8;border-bottom:1px solid #c8c8c8"></div>
<div class="a" style="left:1001px;top:339px;width:13px;height:14px;background:linear-gradient(#f4f4f4,#dcdcdc);border-top:1px solid #b0b0b0"></div>
<svg class="a" style="left:1003px;top:344px" width="9" height="5"><path d="M0 0H9L4.5 4.5Z" fill="#000"/></svg>
<svg class="a" style="left:622px;top:357px" width="6" height="5"><path d="M0.5 3 L3 1 L5.5 3" fill="none" stroke="#606860" stroke-width="1.2"/></svg>
<svg class="a" style="left:630px;top:357px" width="6" height="5"><path d="M0.5 3 L3 1 L5.5 3" fill="none" stroke="#606860" stroke-width="1.2"/></svg>
<svg class="a" style="left:638px;top:357px" width="6" height="5"><path d="M0.5 3 L3 1 L5.5 3" fill="none" stroke="#606860" stroke-width="1.2"/></svg>
<div class="a" style="left:246px;top:363px;width:771px;height:341px;border-top:1px solid #b4b4b4;border-left:1px solid #b4b4b4"></div>
<div class="a" style="left:247px;top:364px;width:769px;height:1px;background:#fff"></div>
<div class="a" style="left:311px;top:368px;width:133px;height:22px;background:#cfcfcf;border-top:1px solid #a8a8a8;border-left:1px solid #e8e8e8;border-right:2px solid #a8a8a8;border-top-left-radius:3px;border-top-right-radius:3px"></div>
<div class="t" style="left:315px;top:371px">Parties du message</div>
<div class="a" style="left:248px;top:365px;width:63px;height:26px;background:#e6e6e6;border-top:1px solid #fff;border-left:1px solid #fff;border-right:2px solid #a8a8a8;border-top-left-radius:3px;border-top-right-radius:3px"></div>
<div class="t" style="left:253px;top:371px">Contenu</div>
<div class="a" style="left:247px;top:390px;width:64px;height:1px;background:#e6e6e6"></div>
<div class="a" style="left:311px;top:390px;width:705px;height:1px;background:#fff"></div>
<div class="a" style="left:249px;top:391px;width:750px;height:312px;background:#e6e6e6"></div>
<div class="a" style="left:250px;top:392px;width:747px;height:310px;background:#fff;border-top:1px solid #000;border-left:1px solid #000"></div>
<div class="a" style="left:247px;top:702px;width:770px;height:2px;background:#a4a4a4"></div>
<div class="a" style="left:1000px;top:391px;width:15px;height:311px;background:linear-gradient(90deg,#c8c8c8,#d8d8d8 50%,#c4c4c4);border:1px solid #b0b0b0"></div>
<div class="a" style="left:1001px;top:392px;width:13px;height:14px;background:linear-gradient(90deg,#fafafa,#d8d8d8);border-bottom:1px solid #b0b0b0"></div>
<svg class="a" style="left:1003px;top:397px" width="9" height="5"><path d="M0 4.5H9L4.5 0Z" fill="#000"/></svg>
<div class="a" style="left:1001px;top:406px;width:13px;height:215px;background:linear-gradient(90deg,#fafafa,#e2e2e2);border-bottom:1px solid #c0c0c0"></div>
<div class="a" style="left:1001px;top:687px;width:13px;height:14px;background:linear-gradient(90deg,#fafafa,#d8d8d8);border-top:1px solid #b0b0b0"></div>
<svg class="a" style="left:1003px;top:692px" width="9" height="5"><path d="M0 0H9L4.5 4.5Z" fill="#000"/></svg>
<div class="a" style="left:261px;top:403px;width:723px;height:93px;background:#d6d5d9;border:2px solid #7c807a;border-right-color:#a8aca8;border-bottom-color:#a8aca8"></div>
<div class="t" style="left:265px;top:405px;font-family:'Liberation Serif',serif;font-size:17px;letter-spacing:0.95px;">Sujet :</div>
<div class="t" style="left:370px;top:405px;font-family:'Liberation Serif',serif;font-size:17px;letter-spacing:0.95px;">Ooops sorry for the spam...</div>
<div class="t" style="left:265px;top:426px;font-family:'Liberation Mono',monospace;font-size:15px;">Date :</div>
<div class="t" style="left:370px;top:426px;font-family:'Liberation Mono',monospace;font-size:15px;">07.08.2004 13:11:59</div>
<div class="t" style="left:265px;top:444px;font-family:'Liberation Mono',monospace;font-size:15px;">De :</div>
<div class="t" style="left:370px;top:444px;font-family:'Liberation Mono',monospace;font-size:15px;">manu &lt;eallaud@yahoo.fr&gt;</div>
<div class="t" style="left:265px;top:462px;font-family:'Liberation Mono',monospace;font-size:15px;">À :</div>
<div class="t" style="left:370px;top:462px;font-family:'Liberation Mono',monospace;font-size:15px;">B-maintainer &lt;balsa-maintainer@theochem.kth.se&gt;</div>
<div class="t" style="left:265px;top:480px;font-family:'Liberation Mono',monospace;font-size:15px;font-style:italic">PGP signature: Cette signature est valide.</div>
<svg class="a" style="left:954px;top:421px" width="10" height="18"><path d="M1.2 1 V12 Q1.2 16.5 5 16.5 Q8.8 16.5 8.8 12 V1 M3.6 1 V11.5 Q3.6 13.5 5 13.5 Q6.4 13.5 6.4 11.5 V1" fill="none" stroke="#000" stroke-width="1.1"/></svg>
<div class="a" style="left:263px;top:509px;white-space:pre;line-height:18px;font-family:'Liberation Mono',monospace;font-size:15px;">        Hi all,
sorry I thought I was sending those images to Pawel only, I did not mean to
spam everybody like that. I should stop everything when I did not meet my
quota of sleep hours the previous night I guess...
Bye
Manu</div>
<div class="a" style="left:271px;top:650px;white-space:pre;line-height:17px;letter-spacing:0.1px">PGP signature: Cette signature est valide.
User ID: Emmanuel ALLAUD (Cle yahoo) &lt;eallaud@yahoo.fr&gt;
Signé le : 07.08.2004 13:12:01</div>
<!-- /RIGHT -->

<!-- ===== status bar ===== -->
<!-- STATUS -->
<div class="a" style="left:6px;top:704px;width:1011px;height:21px;background:#e6e6e6;border-top:1px solid #fff"></div>
<div class="a" style="left:7px;top:705px;width:1010px;height:1px;background:#a4a4a4"></div>
<div class="a" style="left:7px;top:706px;width:149px;height:18px;background:#cfcfcf"></div>
<div class="a" style="left:160px;top:705px;width:857px;height:19px;background:#e6e6e6;border-top:1px solid #a4a4a4;border-left:1px solid #a4a4a4"></div>
<div class="t" style="left:163px;top:708px;letter-spacing:0.12px">Shown mailbox: balsa with 2842 messages, 5 new</div>
<!-- /STATUS -->

<!-- ===== taskbar ===== -->
<!-- TASKBAR -->
<div class="a" style="left:0;top:732px;width:1024px;height:36px;background:#e6e6e6"></div>
<div class="a" style="left:20px;top:732px;width:434px;height:36px;background:#03218a"></div>
<div class="a" style="left:2px;top:734px;width:16px;height:32px;border:1px solid #a8a8a8;border-radius:4px;background:linear-gradient(#f8f8f8,#d4d4d4)"></div>
<svg class="a" style="left:8px;top:746px" width="5" height="7"><path d="M4 0V7L0 3.5Z" fill="#000"/></svg>
<svg class="a" style="left:0;top:732px" width="470" height="36">
<defs>
<linearGradient id="foot" x1="0" y1="0" x2="0" y2="1"><stop offset="0" stop-color="#3a3a3a"/><stop offset="1" stop-color="#5a7a88"/></linearGradient>
<linearGradient id="mon" x1="0" y1="0" x2="0" y2="1"><stop offset="0" stop-color="#fafafa"/><stop offset="1" stop-color="#c8c8c8"/></linearGradient>
<linearGradient id="scr" x1="0" y1="0" x2="0" y2="1"><stop offset="0" stop-color="#555"/><stop offset="1" stop-color="#111"/></linearGradient>
<linearGradient id="bscr" x1="0" y1="0" x2="0" y2="1"><stop offset="0" stop-color="#7890d8"/><stop offset="1" stop-color="#2a40a0"/></linearGradient>
<radialGradient id="redc" cx="0.4" cy="0.35" r="0.7"><stop offset="0" stop-color="#ff7070"/><stop offset="1" stop-color="#c00000"/></radialGradient>
<linearGradient id="tv" x1="0" y1="0" x2="0" y2="1"><stop offset="0" stop-color="#e8e8e0"/><stop offset="1" stop-color="#8a8a80"/></linearGradient>
</defs>
<rect x="20.5" y="0.5" width="35" height="35" fill="none" stroke="#000" stroke-width="1" stroke-dasharray="1 1"/>
<!-- gnome foot -->
<path d="M28.5 19 Q27.5 13 34 13 L41 13.5 Q47.5 14.5 47 20 Q46.5 24 42 25.5 Q47 27 46.5 30.5 Q45.5 34 38 33.5 Q29 33 28.5 25 Z" fill="url(#foot)"/>
<path d="M45 15.5 Q46 20 38 24 Q33.5 26.5 35.5 29 Q38 31 42 28.5" stroke="#e8eef2" stroke-width="1.3" fill="none"/>
<path d="M29.5 31 Q34 35 42 34" stroke="#c8d4dc" stroke-width="1" fill="none"/>
<ellipse cx="27.4" cy="12.3" rx="1.8" ry="2.8" fill="#404040" transform="rotate(-25 27.4 12.3)"/>
<ellipse cx="31.5" cy="9" rx="2" ry="3.2" fill="#404040" transform="rotate(-15 31.5 9)"/>
<ellipse cx="36.8" cy="7.4" rx="2.2" ry="3.4" fill="#404040" transform="rotate(-5 36.8 7.4)"/>
<ellipse cx="45" cy="7" rx="4.6" ry="3.4" fill="#404040" transform="rotate(-30 45 7)"/>
<path d="M28.5 15 Q30 16 31 14.5 M33 12 Q34.5 12.5 35 11 M38.5 10.5 Q40 10.5 40 9 M43 10.5 Q47 10.5 49 8" stroke="#e0e0e0" stroke-width="0.9" fill="none"/>
<path d="M49 7.5 L51 3.5 L53 7.5 Z" fill="#fff"/><rect x="48.5" y="6.5" width="5" height="2" fill="#fff"/>
<!-- lifebuoy -->
<g transform="translate(85.6,17.6)">
<g fill="none" stroke="#9a9a9a" stroke-width="1.4">
<ellipse rx="19" ry="8" transform="rotate(45)"/>
<ellipse rx="19" ry="8" transform="rotate(-45)"/>
</g>
<circle r="11.9" fill="#f4f4f4"/>
<path d="M-4.6 -11 A11.9 11.9 0 0 1 4.6 -11 L2 -4.7 A5.1 5.1 0 0 0 -2 -4.7Z" fill="#e04020" transform="rotate(45)"/>
<path d="M-4.6 -11 A11.9 11.9 0 0 1 4.6 -11 L2 -4.7 A5.1 5.1 0 0 0 -2 -4.7Z" fill="#e04020" transform="rotate(135)"/>
<path d="M-4.6 -11 A11.9 11.9 0 0 1 4.6 -11 L2 -4.7 A5.1 5.1 0 0 0 -2 -4.7Z" fill="#e04020" transform="rotate(225)"/>
<path d="M-4.6 -11 A11.9 11.9 0 0 1 4.6 -11 L2 -4.7 A5.1 5.1 0 0 0 -2 -4.7Z" fill="#e04020" transform="rotate(315)"/>
<circle r="5.1" fill="#03218a"/>
</g>
<!-- system monitor -->
<rect x="117" y="0.5" width="33.5" height="25" rx="1" fill="url(#mon)" stroke="#888" stroke-width="0.8"/>
<rect x="121" y="3" width="26" height="20" fill="url(#scr)"/>
<path d="M121 13.5 H129 L131 10 L133 17.5 L135 12 L137 13.5 H147" stroke="#a8e000" stroke-width="1.3" fill="none"/>
<ellipse cx="134" cy="30.5" rx="11" ry="4" fill="#f0f0f0"/>
<rect x="130" y="25" width="8" height="4" fill="#d8d8d8"/>
<!-- display -->
<rect x="171" y="2" width="27.5" height="21.5" rx="1" fill="url(#mon)" stroke="#999" stroke-width="0.8"/>
<rect x="174" y="4.5" width="22" height="16" fill="url(#bscr)"/>
<ellipse cx="185" cy="28" rx="9" ry="3" fill="#e8e8e8"/>
<circle cx="173.5" cy="23.5" r="9" fill="url(#redc)" stroke="#900" stroke-width="0.5"/>
<path d="M169 25 Q169 19 174.5 19 L173 21.5 M178 22 Q178 28 172.5 28" stroke="#fff" stroke-width="2" fill="none"/>
<!-- terminal -->
<rect x="213" y="2.5" width="31" height="24.5" rx="1.5" fill="url(#tv)" stroke="#333" stroke-width="0.8"/>
<rect x="216.5" y="5.5" width="24" height="17" fill="#3a4442" stroke="#222" stroke-width="0.8"/>
<path d="M218 8 L221 10 L218 12 M222 12 H226" stroke="#e0e0e0" stroke-width="1" fill="none"/>
<rect x="217" y="27" width="23" height="2.5" fill="#707068"/>
<!-- camera/photo -->
<rect x="274" y="8" width="24" height="19" rx="4" fill="#d8d8d8" stroke="#222" stroke-width="1.2"/>
<rect x="277.5" y="11" width="14" height="12" rx="1" fill="#222"/>
<path d="M278 22 L281 16 L283 19 L286 13 L290 22Z" fill="#f0a020"/>
<rect x="292" y="10" width="4" height="15" fill="#aaa"/>
<!-- mozilla -->
<path d="M335 12 L333 15 L336 16 L333 19 L337 20 L334 23 L338 24 L336 27 L340 27 L339 30 L343 29 L342 9 L338 10 Z" fill="#1a1a1a"/>
<path d="M339 10 Q344 4 352 5 Q358 6 362 11 L367 14 Q368 17 365 18 L359 18 L363 21 L356 21 Q352 23 352 27 L351 31 L343 31 Q338 26 338 19 Z" fill="#e83a14"/>
<path d="M344 9 Q347 7 350 9 M345 14 L349 13" stroke="#801000" stroke-width="1" fill="none"/>
<circle cx="352" cy="11" r="1.2" fill="#300"/>
<!-- xmms -->
<defs><radialGradient id="xm" cx="0.5" cy="0.45" r="0.6"><stop offset="0" stop-color="#c8a0f0"/><stop offset="0.6" stop-color="#7a30b8"/><stop offset="1" stop-color="#501890"/></radialGradient></defs>
<rect x="381" y="0" width="36" height="36" fill="url(#xm)"/>
<path d="M383 1 L415 31 M415 1 L383 31" stroke="#000" stroke-width="7"/>
<rect x="381" y="0" width="3" height="36" fill="#000"/>
<text x="383.5" y="35.5" font-family="Liberation Sans" font-weight="bold" font-size="13" fill="#fff" letter-spacing="-0.3">MMS</text>
<!-- mail -->
<defs><linearGradient id="ml" x1="0" y1="0" x2="1" y2="1"><stop offset="0" stop-color="#f0f0f0"/><stop offset="1" stop-color="#8a8a8a"/></linearGradient></defs>
<path d="M421 9.5 L442 7 L449 20 L430 31 Z" fill="url(#ml)"/>
<path d="M421 9.5 L436 19 L442 7" fill="none" stroke="#909090" stroke-width="0.8"/>
<path d="M436 30.5 L447.8 11.3" stroke="#c04040" stroke-width="2"/>
</svg>
<div class="a" style="left:454px;top:732px;width:10px;height:36px;background:#e6e6e6"></div>
<svg class="a" style="left:456px;top:742px" width="6" height="5"><path d="M0.5 3 L3 1 L5.5 3" fill="none" stroke="#606860" stroke-width="1.2"/></svg>
<svg class="a" style="left:456px;top:750px" width="6" height="5"><path d="M0.5 3 L3 1 L5.5 3" fill="none" stroke="#606860" stroke-width="1.2"/></svg>
<svg class="a" style="left:456px;top:758px" width="6" height="5"><path d="M0.5 3 L3 1 L5.5 3" fill="none" stroke="#606860" stroke-width="1.2"/></svg>
<div class="a" style="left:464px;top:733px;width:45px;height:33px;border:1px solid #a4a4a4;border-radius:3px;background:linear-gradient(#f2f2f2,#d8d8d8);overflow:hidden">
<svg class="a" style="left:3px;top:8px" width="15" height="16"><path d="M1 0.5 H10.5 L13.5 3.5 V15 H1Z" fill="#f6f6f6" stroke="#444" stroke-width="0.9"/></svg>
<div class="t" style="left:18px;top:8px">Cen</div>
</div>
<div class="a" style="left:510px;top:733px;width:45px;height:33px;border:1px solid #a4a4a4;border-radius:3px;background:linear-gradient(#f2f2f2,#d8d8d8);overflow:hidden">
<svg class="a" style="left:3px;top:9px" width="16" height="14"><rect x="0.5" y="0.5" width="14.5" height="12" rx="1" fill="#b8b8b0" stroke="#333"/><rect x="2.5" y="2.5" width="10.5" height="8" fill="#3a4442"/><path d="M4 7 H7" stroke="#ccc" stroke-width="0.8"/></svg>
<div class="t" style="left:18px;top:8px">Terr</div>
</div>
<div class="a" style="left:556px;top:733px;width:45px;height:33px;border:1px solid #a4a4a4;border-radius:3px;background:linear-gradient(#f2f2f2,#d8d8d8);overflow:hidden">
<svg class="a" style="left:2px;top:10px" width="16" height="16"><path d="M2 4 L9 2 L14 6 L8 14 L4 12 Z" fill="#9a9a9a"/><path d="M3 4 L8 3 L6 7Z" fill="#e8e8e8"/><path d="M12 5 L5 13" stroke="#c04050" stroke-width="1.2"/></svg>
<div class="t" style="left:18px;top:8px">Bals</div>
</div>
<div class="a" style="left:602px;top:733px;width:45px;height:33px;border:1px solid #a4a4a4;border-radius:3px;background:linear-gradient(#f2f2f2,#d8d8d8);overflow:hidden">
<svg class="a" style="left:1px;top:7px" width="18" height="19"><rect width="18" height="19" fill="#000"/><circle cx="9" cy="9.5" r="7" fill="#909090"/><circle cx="8" cy="8.5" r="3" fill="#d0d0d0"/></svg>
<div class="t" style="left:18px;top:8px">ema</div>
</div>
<div class="a" style="left:648px;top:733px;width:45px;height:33px;border:1px solid #a4a4a4;border-radius:3px;background:linear-gradient(#f2f2f2,#d8d8d8);overflow:hidden">
<svg class="a" style="left:1px;top:7px" width="18" height="19"><rect x="0.5" y="0.5" width="17" height="18" fill="#5080c0" stroke="#223"/><path d="M4 5 V16 M8 5 V16 M12 5V16 M2 9H16M2 13H16" stroke="#f0c040" stroke-width="1"/><path d="M2 17 L16 3" stroke="#e06020" stroke-width="2"/></svg>
<div class="t" style="left:18px;top:8px">moz</div>
</div>
<div class="a" style="left:694px;top:733px;width:45px;height:33px;border:1px solid #a4a4a4;border-radius:3px;background:linear-gradient(#f2f2f2,#d8d8d8);overflow:hidden">
<svg class="a" style="left:1px;top:8px" width="18" height="18"><rect x="0.5" y="0.5" width="17" height="17" fill="#202010" stroke="#444"/><path d="M4 14 V7 Q4 3 9 3 Q14 3 14 7 V14 M7 14V9 M11 14V9" stroke="#d8d0a0" fill="none" stroke-width="1.2"/></svg>
<div class="t" style="left:18px;top:8px">XMM</div>
</div>
<div class="a" style="left:741px;top:732px;width:2px;height:36px;background:#03218a"></div>
<svg class="a" style="left:744px;top:742px" width="6" height="5"><path d="M0.5 3 L3 1 L5.5 3" fill="none" stroke="#606860" stroke-width="1.2"/></svg>
<svg class="a" style="left:744px;top:750px" width="6" height="5"><path d="M0.5 3 L3 1 L5.5 3" fill="none" stroke="#606860" stroke-width="1.2"/></svg>
<svg class="a" style="left:744px;top:758px" width="6" height="5"><path d="M0.5 3 L3 1 L5.5 3" fill="none" stroke="#606860" stroke-width="1.2"/></svg>
<div class="a" style="left:754px;top:733px;width:174px;height:33px;background:#a4a3a6"></div>
<div class="a" style="left:754px;top:733px;width:45px;height:33px;background:#e8e8e8"></div>
<div class="a" style="left:841px;top:733px;width:1px;height:33px;background:#f0f0f0"></div>
<div class="a" style="left:884px;top:733px;width:1px;height:33px;background:#f0f0f0"></div>
<div class="a" style="left:799px;top:733px;width:1px;height:33px;background:#f0f0f0"></div>
<svg class="a" style="left:754px;top:733px" width="45" height="33"><rect x="16.5" y="15.5" width="20" height="12" fill="#fafafa" stroke="#000"/><rect x="30.5" y="1.5" width="5" height="12" fill="#fafafa" stroke="#000"/><rect x="2.5" y="1.5" width="33" height="20" fill="#f2f2f2" stroke="#000"/><path d="M2 23 H16" stroke="#03218a" stroke-width="2.4"/><path d="M12 8 L20 5 L23 9 L18 16 L14 14Z" fill="#a8a8a8" opacity="0.9"/><path d="M22 8 L17 15" stroke="#d04050" stroke-width="1"/></svg>
<div class="t" style="left:933px;top:743px;font-size:14px;letter-spacing:0.3px">14:50</div>
<svg class="a" style="left:980px;top:733px" width="16" height="16"><defs><radialGradient id="sun" cx="0.4" cy="0.35" r="0.7"><stop offset="0" stop-color="#ffd040"/><stop offset="1" stop-color="#f07000"/></radialGradient></defs><circle cx="8" cy="8" r="6.5" fill="url(#sun)" stroke="#d06000" stroke-width="0.6"/></svg>
<div class="t" style="left:973px;top:752px;font-size:14px">29°C</div>
<div class="a" style="left:1007px;top:734px;width:15px;height:32px;border:1px solid #a8a8a8;border-radius:4px;background:linear-gradient(#f8f8f8,#d4d4d4)"></div>
<svg class="a" style="left:1013px;top:746px" width="5" height="7"><path d="M0 0V7L4 3.5Z" fill="#000"/></svg>
<!-- /TASKBAR -->
</body></html>
